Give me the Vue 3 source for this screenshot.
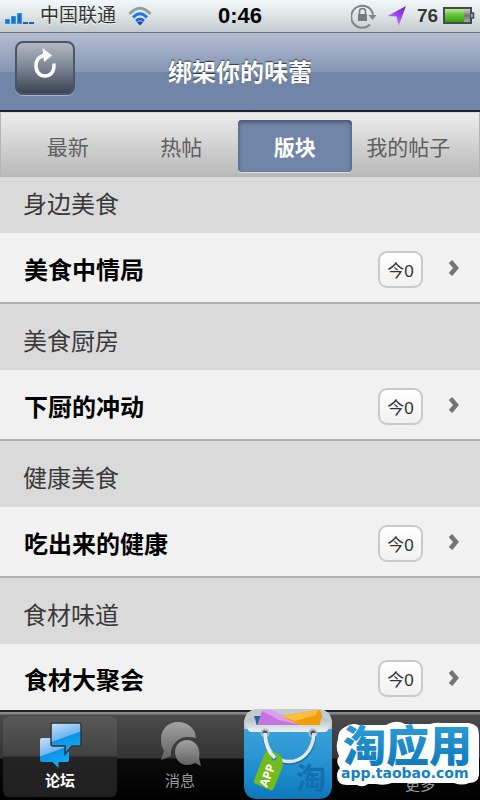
<template>
  <div class="phone">
    <div class="status-bar">
      <div class="status-side">
        <svg class="signal" width="30" height="14" viewBox="0 0 30 14">
          <g fill="#1672d8" stroke="#3f8fe4" stroke-width="1">
            <rect x="0.5" y="7.5" width="4" height="4" />
            <rect x="6.5" y="4.5" width="4" height="7" />
            <rect x="12.5" y="1.5" width="4" height="10" />
          </g>
          <path d="M18 10h5v2h-5zM24 10h5v2h-5z" fill="#1a62b8" />
        </svg>
        <span class="carrier">中国联通</span>
        <svg class="wifi" width="24" height="20" viewBox="0 0 24 20">
          <g fill="none" stroke-width="3">
            <path d="M1.5 8Q12 -3.500 22.500 8" stroke="#979c9e" />
            <path d="M5 11.500Q12 4 19 11.500" stroke="#1e78e6" />
            <path d="M8 15Q12 11 16 15" stroke="#1462d6" stroke-width="2.500" />
          </g>
          <path d="M9 16.500Q12 14 15 16.500L12 19.500z" fill="#0b50c0" />
        </svg>
      </div>
      <span class="time">0:46</span>
      <div class="status-side right">
        <svg width="26" height="26" viewBox="0 0 26 26">
          <path d="M19 21.500A11 11 0 1 1 22 11.500" fill="none" stroke="#7c8587" stroke-width="2" />
          <path d="M17.500 12h8l-4 5z" fill="#7c8587" />
          <rect x="7" y="11" width="9" height="7" fill="#727b7e" />
          <path d="M8.500 11V8.500a3 3 0 0 1 6 0V11" fill="none" stroke="#727b7e" stroke-width="1.500" />
        </svg>
        <svg class="arrow" width="20" height="20" viewBox="0 0 20 20">
          <defs>
            <linearGradient id="arrowFill" x1="1" y1="0" x2="0.300" y2="1">
              <stop offset="0" stop-color="#6a1fc0" />
              <stop offset="0.500" stop-color="#a040ee" />
              <stop offset="1" stop-color="#cf98f8" />
            </linearGradient>
          </defs>
          <path d="M19 0L0.500 10 9.500 10.500 11.500 20z" fill="url(#arrowFill)" />
        </svg>
        <span class="percent">76</span>
        <svg class="battery" width="32" height="18" viewBox="0 0 32 18">
          <defs>
            <linearGradient id="batteryFill" x1="0" y1="0" x2="0" y2="1">
              <stop offset="0" stop-color="#b4ec9a" />
              <stop offset="0.450" stop-color="#63c43c" />
              <stop offset="1" stop-color="#38a010" />
            </linearGradient>
            <linearGradient id="batteryEmpty" x1="0" y1="0" x2="0" y2="1">
              <stop offset="0" stop-color="#dcdcdc" />
              <stop offset="0.500" stop-color="#777" />
              <stop offset="1" stop-color="#aaa" />
            </linearGradient>
          </defs>
          <rect x="1" y="1" width="27" height="15" fill="url(#batteryEmpty)" stroke="#454a4d" stroke-width="2" />
          <rect x="2" y="2" width="19" height="13" fill="url(#batteryFill)" />
          <path d="M28 6h2.500v5H28" fill="#aaa" stroke="#454a4d" stroke-width="1.500" />
        </svg>
      </div>
    </div>

    <header class="nav-bar">
      <button class="refresh" type="button" aria-label="刷新">
        <svg width="24" height="32" viewBox="0 0 24 32">
          <path d="M10.500 7.500C5 9 3 13.500 3 18c0 6 4 10 9 10s9-4 9-10v-2.500" fill="none" stroke="#fff" stroke-width="3.500" />
          <path d="M9.500 0L19 7.500 11 14z" fill="#fff" />
        </svg>
      </button>
      <h1>绑架你的味蕾</h1>
    </header>

    <nav class="tabs">
      <button
        v-for="(tab, index) in tabs"
        :key="tab"
        type="button"
        :class="{ active: index === currentTab }"
        @click="currentTab = index"
      >{{ tab }}</button>
    </nav>

    <main class="board-list">
      <section v-for="board in boards" :key="board.title">
        <h2>{{ board.title }}</h2>
        <a class="row" href="#">
          <span class="name">{{ board.name }}</span>
          <span class="badge">今{{ board.today }}</span>
          <svg class="chevron" width="12" height="18" viewBox="0 0 12 18">
            <path d="M2.500 2.500L8 9l-5.500 6.500" fill="none" stroke="#747474" stroke-width="4.500" />
          </svg>
        </a>
      </section>
    </main>

    <footer class="tab-bar">
      <a class="item active" href="#">
        <svg width="44" height="48" viewBox="0 0 44 48">
          <defs>
            <linearGradient id="bubble" x1="0" y1="0" x2="0.350" y2="1">
              <stop offset="0" stop-color="#c8e0fa" />
              <stop offset="0.540" stop-color="#72b6f0" />
              <stop offset="0.560" stop-color="#0a94e6" />
              <stop offset="1" stop-color="#12aaf4" />
            </linearGradient>
          </defs>
          <path d="M4 17h25q2 0 2 2v20q0 2-2 2h-8.500v6l-6-6H4q-2 0-2-2V19q0-2 2-2z" fill="url(#bubble)" />
          <path d="M15 2h26q2 0 2 2v19q0 2-2 2H34l-7 8v-8H15q-2 0-2-2V4q0-2 2-2z" fill="url(#bubble)" stroke="#353535" stroke-width="1.500" />
        </svg>
        <span>论坛</span>
      </a>
      <a class="item" href="#">
        <svg width="44" height="48" viewBox="0 0 44 48">
          <defs>
            <linearGradient id="chat" x1="0" y1="0" x2="0" y2="1">
              <stop offset="0" stop-color="#a2a2a2" />
              <stop offset="1" stop-color="#606060" />
            </linearGradient>
          </defs>
          <path d="M20 1C9 1 3 9 3 18c0 5 1 9 3 12L3 39l10-4c-1-10 6-18 15-19 3 0 7 0 10 1C38 8 30 1 20 1z" fill="url(#chat)" />
          <path d="M29 19c-7 0-12 5-12 12s5 13 12 13c3 0 6-1 8-2l6 3-2-8c2-9-3-18-12-18z" fill="url(#chat)" />
        </svg>
        <span>消息</span>
      </a>
      <a class="item more" href="#"><span>更多</span></a>

      <svg class="watermark" width="240" height="96" viewBox="0 0 240 96">
        <defs>
          <linearGradient id="bag" x1="0" y1="0" x2="0" y2="1">
            <stop offset="0" stop-color="#3ba2d9" />
            <stop offset="0.550" stop-color="#2290cf" />
            <stop offset="1" stop-color="#0c78bd" />
          </linearGradient>
          <linearGradient id="rim" x1="0" y1="0" x2="0" y2="1">
            <stop offset="0" stop-color="#b4bec4" />
            <stop offset="1" stop-color="#eef1f3" />
          </linearGradient>
          <linearGradient id="brand" x1="0" y1="0" x2="0" y2="1">
            <stop offset="0" stop-color="#35a6dc" />
            <stop offset="1" stop-color="#0b73b9" />
          </linearGradient>
        </defs>
        <path d="M16 4h64q10 1 12 12v10H4V16Q6 5 16 4z" fill="#c3cbcf" />
        <path d="M14 11h68l-3 10H17z" fill="#1c689e" />
        <path d="M22 6q6-2 11 0l30 15H17z" fill="#c476dc" />
        <path d="M22 6q6-2 11 0l28 14-22-5z" fill="#dd9df0" />
        <path d="M41 11l37-6q3 0 4 5l-2 11H62z" fill="#f39c09" />
        <path d="M41 11l37-6-2 5-21 6z" fill="#ffbf38" />
        <path d="M4 24h88v56q0 14-14 14H18Q4 94 4 80z" fill="url(#bag)" />
        <path d="M4 17q5-4 11-4l1 7h64l1-7q6 0 11 4l-4 8q-1 2-4 2H12q-3 0-4-2z" fill="url(#rim)" />
        <g fill="#46525a" stroke="#b2bcc1" stroke-width="2">
          <circle cx="25" cy="28" r="3.500" />
          <circle cx="73" cy="28" r="3.500" />
        </g>
        <path d="M25 31C26 67 72 67 74 31" fill="none" stroke="#1a73ad" stroke-width="4" />
        <path d="M25 28C26 66 72 66 74 28" fill="none" stroke="#dfe5e8" stroke-width="3.500" />
        <path d="M29 45l11 5q2 1 2 4l1 7-9 22q-1 3-4 2L16 79q-3-1-2-4l11-27q2-4 4-3z" fill="#72bb1c" />
        <circle cx="34" cy="53" r="2.500" fill="#2b82b8" />
        <path d="M25 28C25 40 28 47 35 53" fill="none" stroke="#e6ecee" stroke-width="3.500" />
        <text class="tag" x="-13" y="5" transform="translate(27 69) rotate(-69)">APP</text>
        <text class="mark" x="56" y="84">淘</text>
        <path d="M98 34Q98 25 105 22Q112 17 119 20H146Q156 14 165 19H190Q196 17 202 18H229Q239 19 239 30V70Q238 78 229 78Q222 81 214 78H152Q144 81 136 79H128Q123 83 117 80H107Q97 80 97 71Q97 66 100 63Q95 57 99 51Q95 43 98 34z" fill="#fff" />
        <text class="brand" x="103" y="57">淘应用</text>
        <text class="domain" x="101" y="73">app.taobao.com</text>
      </svg>
    </footer>
  </div>
</template>

<script setup>
import { ref } from 'vue'

const tabs = ['最新', '热帖', '版块', '我的帖子']
const currentTab = ref(2)

const boards = [
  { title: '身边美食', name: '美食中情局', today: 0 },
  { title: '美食厨房', name: '下厨的冲动', today: 0 },
  { title: '健康美食', name: '吃出来的健康', today: 0 },
  { title: '食材味道', name: '食材大聚会', today: 0 }
]
</script>

<style>
body { margin: 0; background: #f1f1f1; }
</style>

<style scoped>
.phone { display: flex; flex-direction: column; min-height: 100vh; font-family: "Liberation Sans", "Noto Sans CJK SC", sans-serif; color: #000; }
.phone * { box-sizing: border-box; }
button { font-family: inherit; cursor: pointer; }
a { color: inherit; text-decoration: none; }
svg { display: block; flex: none; }

/* 状态栏 */
.status-bar { display: flex; align-items: center; height: 33px; padding: 0 5px; background: linear-gradient(#f2f8fa, #dde4e6 50%, #c3c9cc); border-bottom: 1px solid #6b7075; }
.status-side { flex: 1; display: flex; align-items: center; }
.status-side.right { justify-content: flex-end; }
.signal { margin-top: 6px; }
.carrier { margin-left: 5px; font-size: 19px; line-height: 32px; color: #333; text-shadow: 0 1px 0 #fff; }
.wifi { margin-left: 12px; }
.time { font-size: 22px; font-weight: bold; line-height: 32px; }
.arrow { margin-left: 10px; }
.percent { margin: 0 5px 0 10px; font-size: 19px; font-weight: bold; line-height: 32px; color: #383838; }

/* 标题栏 */
.nav-bar { display: grid; grid-template-columns: 60px 1fr 60px; align-items: center; height: 79px; padding: 0 15px; background: linear-gradient(#b2bdcf, #8697b5 50%, #7286a8 51%, #6f84a8); border-bottom: 2px solid #1c2430; }
.refresh { display: flex; justify-content: center; width: 60px; height: 54px; margin-bottom: 8px; padding: 5px 0 0; border: 2px solid #4c5566; border-radius: 8px; background: linear-gradient(#b1b7c2, #7c8493 50%, #3c4454); box-shadow: 0 1px 0 #a4b1c7; }
h1 { margin: 0; padding-top: 2px; text-align: center; font-size: 24px; font-weight: bold; line-height: 32px; color: #fff; text-shadow: 0 -1px 1px #2c3646; }

/* 顶部分类 */
.tabs { display: grid; grid-template-columns: repeat(4, 1fr); align-items: center; height: 65px; padding: 2px 14px 0 10px; background: linear-gradient(#ececec, #b9b9b9); border: 1px solid #b5b5b5; border-top-color: #d8d8d8; }
.tabs button { height: 52px; padding: 0; border: 0; border-radius: 4px; background: none; font-size: 21px; color: #606060; white-space: nowrap; }
.tabs .active { background: #7085a8; color: #fff; box-shadow: inset 0 2px 4px #3f4f69, 0 1px 0 #dedede; font-weight: bold; }

/* 版块列表 */
.board-list { flex: 1; }
h2 { margin: 0; padding: 22px 23px 12px; background: #dadada; font-size: 24px; font-weight: normal; line-height: 32px; color: #3a3a3a; }
section:first-child h2 { padding: 12px 23px; }
.row { display: flex; align-items: center; height: 71px; padding: 3px 20px 0 24px; background: #f1f1f1; border-bottom: 2px solid #b0b0b0; }
section:last-child .row { height: 66px; border-bottom: 0; }
.name { flex: 1; padding-top: 4px; font-size: 24px; font-weight: bold; line-height: 32px; }
.badge { width: 45px; height: 37px; padding-top: 2px; border: 2px solid #cacaca; border-radius: 9px; background: linear-gradient(#fff, #f1f1f1); text-align: center; font-size: 17px; line-height: 34px; color: #333; }
.chevron { margin: 0 0 2px 25px; }

/* 底部导航 */
.tab-bar { position: relative; display: grid; grid-template-columns: repeat(4, 1fr); height: 91px; padding-top: 3px; border-top: 2px solid #222; background: linear-gradient(#888 2px, #4a4a4a 3px, #343434 46px, #0b0b0b 47px, #000); }
.item { display: flex; flex-direction: column; align-items: center; height: 81px; margin: 1px 3px 0; padding-top: 5px; border-radius: 6px; font-size: 15px; line-height: 24px; color: #999; }
.item.active { background: linear-gradient(#595959, #414141 40px, #242424 41px, #202020); color: #fff; font-weight: bold; }
.more { grid-column: 4; justify-content: flex-end; }
.watermark { position: absolute; right: 0; bottom: 0; }
.tag { font: bold 12px "Open Sans", sans-serif; fill: #fff; }
.mark { font: bold 30px "Noto Sans CJK SC", sans-serif; fill: #126fae; }
.brand { font: 900 43px "Noto Sans CJK SC", sans-serif; fill: url(#brand); }
.domain { font: bold 14px "DejaVu Sans", sans-serif; fill: #1580c4; }
</style>
